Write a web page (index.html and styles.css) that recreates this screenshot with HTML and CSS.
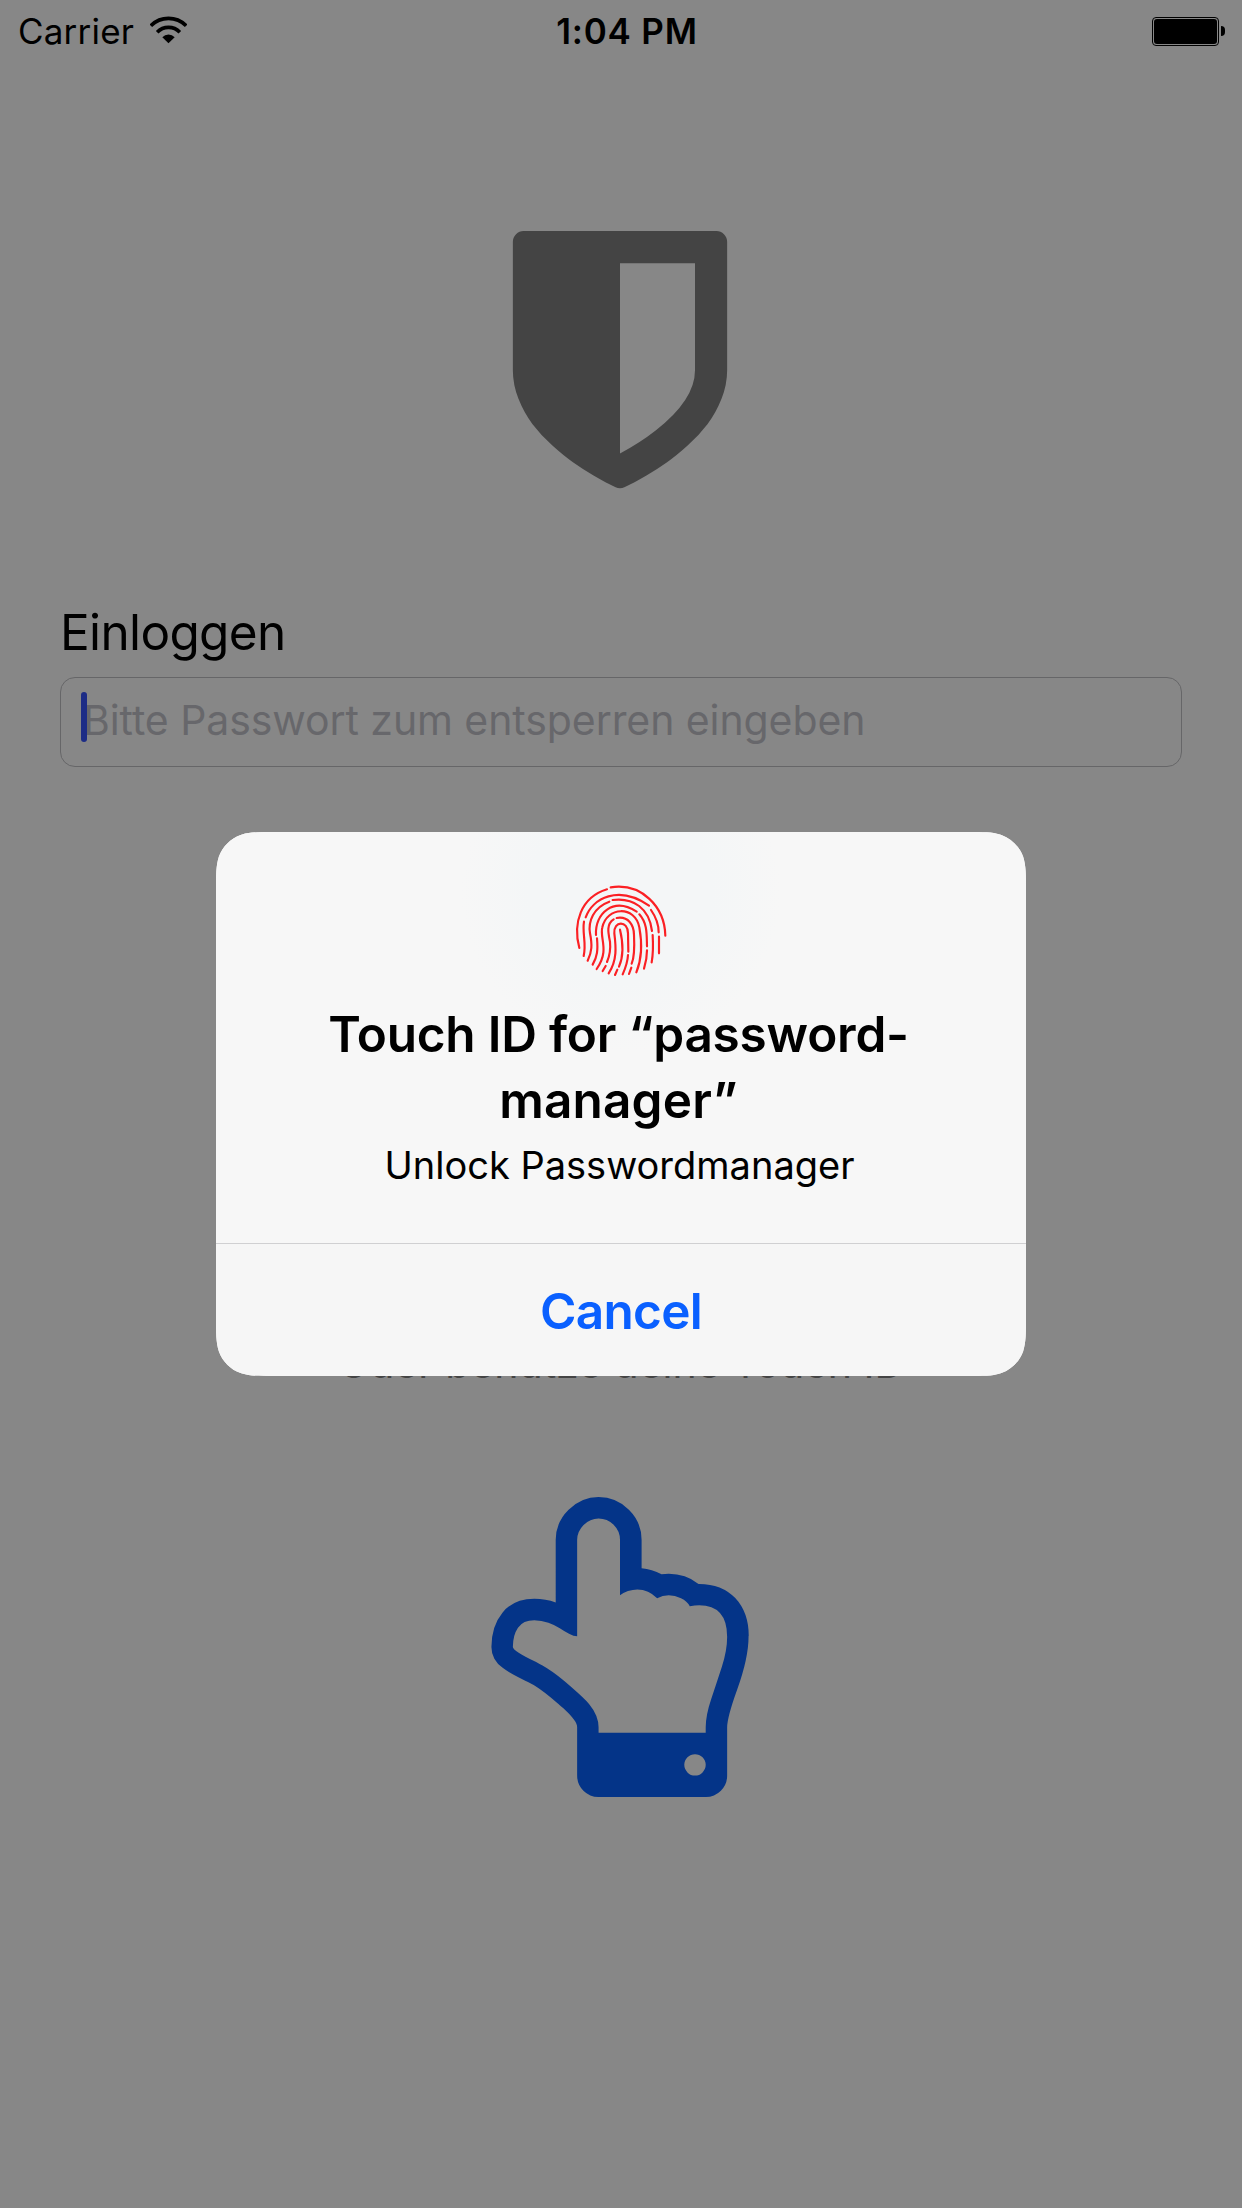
FILE: index.html
```html
<!DOCTYPE html>
<html lang="de">
<head>
<meta charset="utf-8">
<title>Einloggen</title>
<link rel="stylesheet" href="styles.css">
</head>
<body>
<main class="screen">
  <header class="status">
    <div class="status-left">
      <span class="carrier">Carrier</span>
      <svg class="wifi" viewBox="0 0 111 84" fill="none" stroke="#000" stroke-width="11">
        <path d="M2.5 29.5A74.5 74.5 0 0 1 108.500 29.500M21.500 48.500A47.500 47.500 0 0 1 89.500 48.500"/>
        <path d="M55.500 82L37 63.500A26 26 0 0 1 74 63.500Z" fill="#000" stroke="none"/>
      </svg>
    </div>
    <span class="time">1:04 PM</span>
    <div class="battery"><span class="battery-body"><span class="battery-fill"></span></span><span class="battery-cap"></span></div>
  </header>

  <svg class="shield" viewBox="0 0 1792 1792"><path d="M1344 832v-640h-448v1137q119-63 213-137 235-184 235-360zm192-768v768q0 86-33.500 170.500t-83 150-118 127.500-126.500 103-121 77.500-89.500 49.500-42.500 20q-12 6-26 6t-26-6q-16-7-42.500-20t-89.500-49.500-121-77.500-126.500-103-118-127.500-83-150-33.500-170.500v-768q0-26 19-45t45-19h1152q26 0 45 19t19 45z"/></svg>

  <section class="form">
    <label class="label">Einloggen</label>
    <div class="field"><span class="caret"></span><span class="placeholder">Bitte Passwort zum entsperren eingeben</span></div>
  </section>

  <p class="hint">Oder benutze deine Touch ID</p>
  <svg class="hand" viewBox="0 0 1792 1792"><path d="M1408 1600q0-26-19-45t-45-19-45 19-19 45 19 45 45 19 45-19 19-45zm128-764q0-189-167-189-26 0-56 5-16-30-52.500-47.500t-73.500-17.500-69 18q-50-53-119-53-25 0-55.500 10t-47.500 25v-331q0-52-38-90t-90-38q-51 0-89.500 39t-38.500 89v576q-20 0-48.500-15t-55-33-68-33-84.500-15q-67 0-97.500 44.500t-30.500 115.500q0 24 139 90 44 24 65 37 64 40 145 112 81 71 106 101 57 69 57 140v32h640v-32q0-72 32-167t64-193.500 32-179.500zm128-5q0 133-69 322-59 164-59 223v288q0 53-37.500 90.500t-90.500 37.500h-640q-53 0-90.500-37.500t-37.500-90.500v-288q0-10-4.500-21.500t-14-23.500-18-22.500-22.500-24-21.500-20.500-21.500-19-17-14q-74-65-129-100-21-13-62-33t-72-37-63-40.500-49.500-55-17.500-69.500q0-125 67-206.500t189-81.500q68 0 128 22v-374q0-104 77-180t179-76q105 0 181 75.500t76 180.500v169q62 4 119 37 21-3 43-3 101 0 178 60 139-1 219.500 85t80.500 227z"/></svg>

  <div class="overlay">
    <div class="dialog">
      <div class="dialog-body">
        <svg class="finger" viewBox="0 0 360 360" fill="none" stroke="#fb2024" stroke-width="6.500" stroke-linecap="round">
          <path d="M58 234C38 160 62 82 141 58M152 52C245 38 314 110 316 197"/>
          <path d="M77 142C98 85 175 43 267 107M72 155C66 190 80 220 71 258M273 120C289 143 296 165 296 187M297 200V250"/>
          <path d="M148 95C100 112 84 155 90 190C97 225 96 245 83 272M158 90C220 82 268 115 276 183M278 195C280 230 279 255 275 277"/>
          <path d="M108 195C104 130 160 80 230 125M111 205C114 240 112 260 98 284M238 133C262 160 260 190 261 229M261 241C261 265 257 280 252 296"/>
          <path d="M110 297C150 240 118 205 127 172C140 110 225 105 238 172C246 215 246 265 229 307M128 303L137 288"/>
          <path d="M161 148C138 162 145 190 150 215C153 245 148 260 141 276M170 144C205 138 222 165 222 195C224 235 224 260 215 281M207 312L214 293"/>
          <path d="M146 310C172 270 168 230 163 190C160 152 204 150 204 190L205 245M204 255C203 275 196 295 188 313"/>
          <path d="M180 179C190 220 190 260 177 290M165 315L172 299"/>
        </svg>
        <h1 class="title">Touch ID for “password-<br><span class="title-end">manager”</span></h1>
        <p class="message">Unlock Passwordmanager</p>
      </div>
      <button class="cancel">Cancel</button>
    </div>
  </div>
</main>
</body>
</html>
```
FILE: styles.css
```css
* { box-sizing: border-box; }
body { margin: 0; }
.screen {
  position: relative;
  width: 1242px;
  height: 2208px;
  overflow: hidden;
  background: #878787;
  color: #000;
  font-family: Inter, "Liberation Sans", sans-serif;
  display: flex;
  flex-direction: column;
  align-items: center;
}
.status {
  width: 100%;
  height: 60px;
  padding: 0 17px 0 18px;
  display: grid;
  grid-template-columns: 1fr auto 1fr;
  align-items: center;
  font-size: 35px;
  line-height: 60px;
}
.status-left { display: flex; align-items: center; gap: 16px; }
.carrier { letter-spacing: 0.2px; padding-top: 1px; }
.wifi { width: 37px; height: 28px; margin-bottom: 2px; }
.time { font-weight: 600; letter-spacing: 0.8px; padding: 1px 0 0 11px; }
.battery { display: flex; align-items: center; justify-content: flex-end; gap: 2px; padding-top: 1px; }
.battery-body { width: 67px; height: 29px; padding: 1px; border: 1px solid #000; border-radius: 4px; }
.battery-fill { display: block; height: 100%; background: #000; border-radius: 3px; }
.battery-cap { width: 4px; height: 10px; background: #000; border-radius: 0 4px 4px 0; }
.shield, .hand { width: 300px; height: 300px; flex: none; margin-right: 2px; }
.shield { margin-top: 171px; fill: #444; }
.hand { margin-top: 109px; fill: #043488; }
.form { width: 1122px; margin-top: 71px; }
.label { display: block; margin-bottom: 15px; font-size: 49.5px; line-height: 60px; letter-spacing: -0.65px; }
.field {
  display: flex;
  align-items: center;
  height: 90px;
  padding: 0 20px 5px;
  border: 1px solid #666668;
  border-radius: 15px;
}
.caret { width: 6px; height: 50px; margin: 0 -4px 5px 0; border-radius: 3px; background: #1d2c86; z-index: 1; }
.placeholder { font-size: 41px; letter-spacing: -0.08px; color: #67676b; white-space: nowrap; }
.hint { margin: 571px 0 0; font-size: 41px; line-height: 50px; color: #444; white-space: nowrap; }
.overlay { position: absolute; inset: 0; display: flex; align-items: center; justify-content: center; }
.dialog {
  width: 810px;
  height: 544px;
  display: flex;
  flex-direction: column;
  background: #f7f7f7;
  clip-path: path("M59.6 0H750.4C767.5 0 776.1 0 783.9 2.5L785.4 2.9C795.5 6.6 803.4 14.5 807.1 24.6C810 33.9 810 42.5 810 59.6V484.4C810 501.5 810 510.1 807.1 519.4C803.4 529.5 795.5 537.4 785.4 541.1L783.9 541.5C776.1 544 767.5 544 750.4 544H59.6C42.5 544 33.9 544 26.1 541.5L24.6 541.1C14.5 537.4 6.6 529.5 2.9 519.4C0 510.1 0 501.5 0 484.4V59.6C0 42.5 0 33.9 2.9 24.6C6.6 14.5 14.5 6.6 24.6 2.9L26.1 2.5C33.9 0 42.5 0 59.6 0Z");
}
.dialog-body {
  height: 411px;
  padding-top: 38px;
  display: flex;
  flex-direction: column;
  align-items: center;
  text-align: center;
  background: radial-gradient(circle at 50% 60px, #f4f6f7 90px, #f7f7f7 160px);
}
.finger { width: 120px; height: 120px; flex: none; margin-right: 2px; }
.title { margin: 11px 5px 0 0; font-size: 49.5px; line-height: 66px; font-weight: 600; letter-spacing: -0.22px; white-space: nowrap; }
.title-end { letter-spacing: 0.15px; }
.message { margin: 8px 3px 0 0; font-size: 38px; line-height: 48px; }
.cancel {
  flex: 1;
  padding: 2px 0 0;
  border: 0;
  border-top: 1px solid #d0d0d2;
  background: #f6f6f6;
  color: #0a60ff;
  font: 600 49.5px/60px Inter, "Liberation Sans", sans-serif;
  letter-spacing: -0.7px;
}
```
